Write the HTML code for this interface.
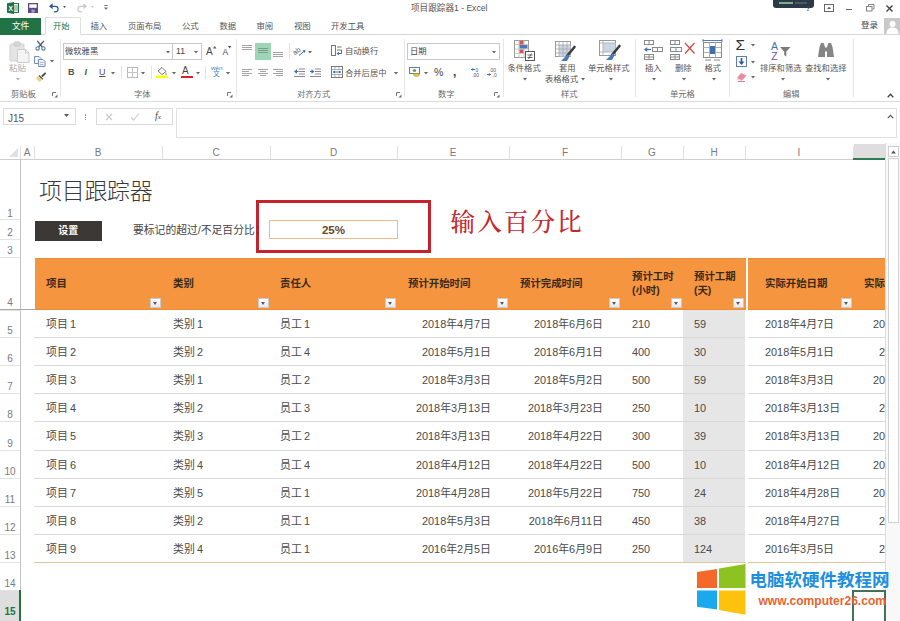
<!DOCTYPE html>
<html lang="zh-CN">
<head>
<meta charset="utf-8">
<title>项目跟踪器1 - Excel</title>
<style>
*{box-sizing:border-box;margin:0;padding:0}
html,body{width:900px;height:621px;overflow:hidden;background:#fff}
body{position:relative;font-family:"Liberation Sans","Noto Sans CJK SC",sans-serif;color:#444;font-size:9px}
.a{position:absolute;white-space:nowrap}
.t{position:absolute;white-space:nowrap;line-height:1;color:#555}
svg{position:absolute;overflow:visible}
/* ---------- title / tabs ---------- */
#title{left:411px;top:3.5px;font-size:8.6px;color:#555;letter-spacing:0}
#filetab{left:0;top:18px;width:41px;height:17px;background:#217346;color:#fff;font-size:8.6px;text-align:center;line-height:16px}
.tab{top:22px;font-size:8.4px;color:#555}
#hometab{left:45px;top:17px;width:36px;height:18px;border:1px solid #e0e0e0;border-bottom:1px solid #fff;background:#fff}
#tabline{left:0;top:34px;width:900px;height:1px;background:#d8d8d8}
#ribbonbot{left:0;top:101px;width:900px;height:1px;background:#dcdcdc}
.gsep{width:1px;top:39px;height:58px;background:#e6e6e6}
.glabel{top:89px;font-size:9px;color:#666}
.rl{font-size:9px;color:#444}
/* ---------- formula bar ---------- */
.box{border:1px solid #dadada;background:#fff}
/* ---------- sheet ---------- */
.colh{top:145px;font-size:10px;color:#7a7a7a;text-align:center;height:15px;line-height:15px}
.rowh{left:0;width:20px;text-align:center;font-size:10px;color:#7a7a7a;line-height:1}
.vl{width:1px;background:#e0e0e0}
.hl{height:1px;background:#d9d9d9}
.th{font-weight:bold;font-size:10.4px;color:#3a2a1a;line-height:1}
.td{font-size:10.9px;color:#4a4a4a;line-height:1}
.fb{width:11px;height:10px;background:linear-gradient(#fff,#e9e9e9);border:1px solid #c9c9c9}
.fb:after{content:"";position:absolute;left:2px;top:3px;border:2.5px solid transparent;border-top:3px solid #5a5a5a;border-bottom:0}
</style>
</head>
<body>
<!-- TITLE BAR -->
<div class="t" id="title">项目跟踪器1 - Excel</div>
<!-- TABS -->
<div class="a" id="tabline"></div>
<div class="a" id="filetab">文件</div>
<div class="a" id="hometab"></div>
<div class="t tab" style="left:53px;color:#217346">开始</div>
<div class="t tab" style="left:90.5px">插入</div>
<div class="t tab" style="left:128px">页面布局</div>
<div class="t tab" style="left:182px">公式</div>
<div class="t tab" style="left:219.5px">数据</div>
<div class="t tab" style="left:256.5px">审阅</div>
<div class="t tab" style="left:294px">视图</div>
<div class="t tab" style="left:331px">开发工具</div>
<div class="t" style="left:861px;top:21px;font-size:8.5px;color:#444">登录</div>
<!-- QUICK ACCESS TOOLBAR -->
<svg style="left:7px;top:2px" width="12" height="12" viewBox="0 0 12 12" ><rect x="5" y="1.5" width="6.5" height="9" fill="#fff" stroke="#217346" stroke-width="1"/><path d="M7 4H11M7 6H11M7 8H11" stroke="#217346" stroke-width=".8"/><path d="M0 1.3L7 0V12L0 10.7Z" fill="#217346"/><text x="1.6" y="8.6" font-family="Liberation Sans,sans-serif" font-size="6.5" font-weight="bold" fill="#fff">X</text></svg>
<svg style="left:28.3px;top:3.2px" width="10" height="10" viewBox="0 0 10 10" ><rect x=".65" y=".65" width="8.7" height="8.7" fill="#fff" stroke="#5b4a8a" stroke-width="1.3"/><rect x="1" y="4.8" width="8" height="4.6" fill="#5b4a8a"/><rect x="3.4" y="6.6" width="3.2" height="3" fill="#a99fc6"/></svg>
<svg style="left:48.5px;top:3px" width="11" height="10" viewBox="0 0 11 10" ><path d="M1.5 3.3H6.3A2.8 2.8 0 0 1 6.3 8.9H4.8" fill="none" stroke="#2b579a" stroke-width="1.25"/><path d="M0 3.3L3.6 .3V6.3Z" fill="#2b579a"/></svg>
<svg style="left:63.3px;top:6.2px" width="3" height="2" viewBox="0 0 3 2"><path d="M0 0H3L1.5 2Z" fill="#555"/></svg>
<svg style="left:76px;top:3px" width="11" height="10" viewBox="0 0 11 10" ><path d="M9.5 3.3H4.7A2.8 2.8 0 0 0 4.7 8.9H6.2" fill="none" stroke="#cacaca" stroke-width="1.25"/><path d="M11 3.3L7.4 .3V6.3Z" fill="#cacaca"/></svg>
<svg style="left:90.5px;top:6.2px" width="3" height="2" viewBox="0 0 3 2"><path d="M0 0H3L1.5 2Z" fill="#c8c8c8"/></svg>
<svg style="left:104px;top:5.3px" width="4" height="5" viewBox="0 0 4 5" ><path d="M.3 .5H3.7" stroke="#666" stroke-width=".9"/><path d="M0 2.4H4L2 4.8Z" fill="#666"/></svg>
<div class="a" style="left:773px;top:0;width:41px;height:8px;background:#2c3a47;border-radius:0 0 3px 3px"></div>
<div class="a" style="left:779px;top:2px;width:14px;height:2px;background:#7fae8c"></div>
<div class="a" style="left:795px;top:2px;width:12px;height:2px;background:#4a5a68"></div>
<div class="t" style="left:806px;top:6px;font-size:6.5px;color:#444;font-weight:bold">?</div>
<svg style="left:824px;top:4px" width="10" height="8" viewBox="0 0 10 8" ><rect x=".5" y=".5" width="9" height="7" fill="none" stroke="#666" stroke-width="1"/><path d="M3 5L5 2.5L7 5Z" fill="#666"/></svg>
<div class="a" style="left:845.5px;top:9px;width:6.5px;height:1px;background:#666"></div>
<svg style="left:865.5px;top:4px" width="9" height="8" viewBox="0 0 9 8" ><path d="M2.5 2V.5H8V5H6.5" fill="none" stroke="#777" stroke-width=".9"/><rect x=".5" y="2.5" width="5.5" height="4.5" fill="#fff" stroke="#777" stroke-width=".9"/></svg>
<svg style="left:886px;top:5px" width="7" height="7" viewBox="0 0 7 7" ><path d="M.5 .5L6.5 6.5M6.5 .5L.5 6.5" stroke="#444" stroke-width="1.4"/></svg>
<div class="a" style="left:884px;top:18px;width:16px;height:16px;background:#c9c9c9;overflow:hidden"></div>
<svg style="left:884px;top:18px" width="16" height="16" viewBox="0 0 16 16" ><circle cx="8.5" cy="6" r="3" fill="#fff"/><path d="M2.5 16C2.5 11 5 9.5 8.5 9.5S14.5 11 14.5 16Z" fill="#fff"/></svg>
<!-- RIBBON GROUPS -->
<div class="a gsep" style="left:60px"></div>
<div class="a gsep" style="left:236px"></div>
<div class="a gsep" style="left:404px"></div>
<div class="a gsep" style="left:503px"></div>
<div class="a gsep" style="left:635px"></div>
<div class="a gsep" style="left:729px"></div>
<div class="a gsep" style="left:853px"></div>
<svg style="left:9px;top:41px" width="21" height="22" viewBox="0 0 21 22" ><rect x="1" y="3" width="14" height="17" rx="1" fill="#e4e4e4" stroke="#cfcfcf"/><rect x="5" y="1" width="6" height="4" rx="1" fill="#d8d8d8" stroke="#c6c6c6"/><path d="M8.5 8.5H16.5L20 12V21.5H8.5Z" fill="#f4f4f4" stroke="#cccccc"/><path d="M16.5 8.5V12H20" fill="none" stroke="#ccc"/></svg>
<div class="t" style="left:9px;top:64px;font-size:8.5px;color:#ababab;">粘贴</div>
<svg style="left:16px;top:78px" width="4" height="2.4" viewBox="0 0 4 2.4"><path d="M0 0H4L2 2.4Z" fill="#b0b0b0"/></svg>
<svg style="left:35px;top:40px" width="11" height="11" viewBox="0 0 11 11" ><path d="M2.2 .8L7.3 7M8.8 .8L3.7 7" stroke="#50596a" stroke-width="1.3" fill="none"/><circle cx="2.6" cy="8.4" r="1.7" fill="none" stroke="#5878a8" stroke-width="1.1"/><circle cx="8.4" cy="8.4" r="1.7" fill="none" stroke="#5878a8" stroke-width="1.1"/></svg>
<svg style="left:34px;top:56px" width="12" height="11" viewBox="0 0 12 11" ><path d="M.5 .5H5L7 2.5V7.5H.5Z" fill="#eef2f8" stroke="#7a8fae"/><path d="M4.5 3.5H9L11 5.5V10.5H4.5Z" fill="#eef2f8" stroke="#7a8fae"/><path d="M6 6.5H9.5M6 8.5H9.5" stroke="#9ab" stroke-width=".8"/></svg>
<svg style="left:50px;top:60px" width="4" height="2.4" viewBox="0 0 4 2.4"><path d="M0 0H4L2 2.4Z" fill="#666"/></svg>
<svg style="left:35px;top:72px" width="12" height="11" viewBox="0 0 12 11" ><path d="M7.3 4L10.2 1.4" stroke="#4a4a4a" stroke-width="1.8" stroke-linecap="round"/><path d="M3 4L7 8L4.5 10L1 6.5Z" fill="#ecd778"/><path d="M4 3.4L7.8 7.2" stroke="#555" stroke-width="1.4"/></svg>
<div class="t" style="left:11px;top:90px;font-size:8.3px;color:#6a6a6a;">剪贴板</div>
<svg style="left:52px;top:92px" width="6" height="6" viewBox="0 0 6 6" ><path d="M.5 4V.5H4" fill="none" stroke="#777" stroke-width="1"/><path d="M2.5 5.5H5.5V2.5Z" fill="#666"/></svg>
<div class="a box" style="left:63px;top:43px;width:110px;height:17px;border-color:#c8c8c8"></div>
<div class="a box" style="left:172px;top:43px;width:30px;height:17px;border-color:#c8c8c8"></div>
<div class="t" style="left:65px;top:47px;font-size:8.3px;color:#444;">微软雅黑</div>
<svg style="left:165.5px;top:50.5px" width="4" height="2.4" viewBox="0 0 4 2.4"><path d="M0 0H4L2 2.4Z" fill="#666"/></svg>
<div class="t" style="left:176px;top:47px;font-size:8.6px;color:#444;">11</div>
<svg style="left:194px;top:50.5px" width="4" height="2.4" viewBox="0 0 4 2.4"><path d="M0 0H4L2 2.4Z" fill="#666"/></svg>
<div class="t" style="left:206px;top:46.5px;font-size:10px;color:#4a4a4a;">A</div>
<svg style="left:212.5px;top:45.5px" width="3.4" height="2.6" viewBox="0 0 3.4 2.6" ><path d="M0 2.6L1.7 0L3.4 2.6Z" fill="#555"/></svg>
<div class="t" style="left:222.5px;top:48px;font-size:8.5px;color:#4a4a4a;">A</div>
<svg style="left:228px;top:46px" width="3.4" height="2.6" viewBox="0 0 3.4 2.6" ><path d="M0 0L1.7 2.6L3.4 0Z" fill="#555"/></svg>
<div class="t" style="left:68px;top:68px;font-size:9px;color:#555;font-weight:bold">B</div>
<div class="t" style="left:84.5px;top:68px;font-size:9px;color:#555;font-weight:bold;font-style:italic">I</div>
<div class="t" style="left:99px;top:68px;font-size:9px;color:#555;text-decoration:underline">U</div>
<svg style="left:111px;top:72px" width="4" height="2.4" viewBox="0 0 4 2.4"><path d="M0 0H4L2 2.4Z" fill="#666"/></svg>
<div class="a" style="left:121px;top:66px;width:1px;height:13px;background:#e2e2e2"></div>
<svg style="left:127px;top:67px" width="11" height="11" viewBox="0 0 11 11" ><rect x=".5" y=".5" width="10" height="10" fill="none" stroke="#b8b8b8"/><path d="M5.5 0V11M0 5.5H11" stroke="#c4c4c4"/></svg>
<svg style="left:141px;top:72px" width="4" height="2.4" viewBox="0 0 4 2.4"><path d="M0 0H4L2 2.4Z" fill="#666"/></svg>
<div class="a" style="left:151px;top:66px;width:1px;height:13px;background:#e2e2e2"></div>
<svg style="left:156px;top:66px" width="12" height="12" viewBox="0 0 12 12" ><path d="M2 5L6 1.5L10 5.5L6 8.5Z" fill="#fff" stroke="#777"/><path d="M10 6.5C11 8 11 8.6 10.2 8.8S9.2 8 10 6.5Z" fill="#777"/><rect x="0" y="9.5" width="12" height="2.5" fill="#ffff00"/></svg>
<svg style="left:172px;top:72px" width="4" height="2.4" viewBox="0 0 4 2.4"><path d="M0 0H4L2 2.4Z" fill="#666"/></svg>
<div class="t" style="left:182px;top:66px;font-size:10px;color:#444;">A</div>
<div class="a" style="left:181px;top:75.5px;width:12px;height:2.5px;background:#e01f1f"></div>
<svg style="left:196px;top:72px" width="4" height="2.4" viewBox="0 0 4 2.4"><path d="M0 0H4L2 2.4Z" fill="#666"/></svg>
<div class="a" style="left:205px;top:66px;width:1px;height:13px;background:#e2e2e2"></div>
<div class="t" style="left:211px;top:65px;font-size:6.2px;color:#4a78b8;">wén</div>
<div class="t" style="left:213px;top:71px;font-size:6.8px;color:#4a78b8;">文</div>
<svg style="left:226px;top:72px" width="4" height="2.4" viewBox="0 0 4 2.4"><path d="M0 0H4L2 2.4Z" fill="#666"/></svg>
<div class="t" style="left:134px;top:90px;font-size:8.3px;color:#6a6a6a;">字体</div>
<svg style="left:227px;top:92px" width="6" height="6" viewBox="0 0 6 6" ><path d="M.5 4V.5H4" fill="none" stroke="#777" stroke-width="1"/><path d="M2.5 5.5H5.5V2.5Z" fill="#666"/></svg>
<svg style="left:242px;top:45px" width="10" height="6" viewBox="0 0 10 6" ><rect x="0" y="0" width="10" height="1" fill="#a2a2a2"/><rect x="0" y="2" width="10" height="1" fill="#a2a2a2"/><rect x="0" y="4" width="10" height="1" fill="#a2a2a2"/></svg>
<div class="a" style="left:255px;top:43px;width:16px;height:17px;background:#9fd5b7"></div>
<svg style="left:258px;top:48px" width="10" height="6" viewBox="0 0 10 6" ><rect x="0" y="0" width="10" height="1" fill="#7c9a88"/><rect x="0" y="2" width="10" height="1" fill="#7c9a88"/><rect x="0" y="4" width="10" height="1" fill="#7c9a88"/></svg>
<svg style="left:273px;top:52px" width="10" height="6" viewBox="0 0 10 6" ><rect x="0" y="0" width="10" height="1" fill="#a2a2a2"/><rect x="0" y="2" width="10" height="1" fill="#a2a2a2"/><rect x="0" y="4" width="10" height="1" fill="#a2a2a2"/></svg>
<div class="a" style="left:289px;top:43px;width:1px;height:16px;background:#e2e2e2"></div>
<svg style="left:294px;top:45px" width="12" height="11" viewBox="0 0 12 11" ><text x="0" y="8" font-size="7" font-family="Liberation Sans,sans-serif" fill="#555" transform="rotate(-35 4 8)">ab</text><path d="M5 10.5L11 5.5" stroke="#3f6fb0" stroke-width="1"/><path d="M11.5 5L8.5 5.6L10.8 8Z" fill="#3f6fb0"/></svg>
<svg style="left:308px;top:50.5px" width="4" height="2.4" viewBox="0 0 4 2.4"><path d="M0 0H4L2 2.4Z" fill="#666"/></svg>
<svg style="left:331px;top:45px" width="11" height="11" viewBox="0 0 11 11" ><rect x=".5" y=".5" width="4" height="10" fill="#fff" stroke="#777"/><path d="M6 2H10.5M6 5H10.5" stroke="#777"/><path d="M6 8.5H10.5V5" fill="none" stroke="#3f6fb0"/><path d="M5.5 8.5L8 6.8V10.2Z" fill="#3f6fb0"/></svg>
<div class="t" style="left:345px;top:47px;font-size:8.3px;color:#555;">自动换行</div>
<svg style="left:242px;top:69px" width="10" height="8" viewBox="0 0 10 8" ><rect x="0" y="0" width="10" height="1" fill="#a2a2a2"/><rect x="0" y="2" width="7" height="1" fill="#a2a2a2"/><rect x="0" y="4" width="10" height="1" fill="#a2a2a2"/><rect x="0" y="6" width="7" height="1" fill="#a2a2a2"/></svg>
<svg style="left:257.5px;top:69px" width="10" height="8" viewBox="0 0 10 8" ><rect x="0.0" y="0" width="10" height="1" fill="#a2a2a2"/><rect x="2.0" y="2" width="6" height="1" fill="#a2a2a2"/><rect x="0.0" y="4" width="10" height="1" fill="#a2a2a2"/><rect x="2.0" y="6" width="6" height="1" fill="#a2a2a2"/></svg>
<svg style="left:273px;top:69px" width="10" height="8" viewBox="0 0 10 8" ><rect x="0" y="0" width="10" height="1" fill="#a2a2a2"/><rect x="3" y="2" width="7" height="1" fill="#a2a2a2"/><rect x="0" y="4" width="10" height="1" fill="#a2a2a2"/><rect x="3" y="6" width="7" height="1" fill="#a2a2a2"/></svg>
<svg style="left:294px;top:68px" width="11" height="10" viewBox="0 0 11 10" ><path d="M5 1H11M5 3.5H11M5 6H11M0 8.5H11" stroke="#8a8a8a"/><path d="M0 3.5L3 1.3V5.7Z" fill="#3f6fb0"/><path d="M2 3.5H4.5" stroke="#3f6fb0"/></svg>
<svg style="left:310px;top:68px" width="11" height="10" viewBox="0 0 11 10" ><path d="M5 1H11M5 3.5H11M5 6H11M0 8.5H11" stroke="#8a8a8a"/><path d="M4.5 3.5L1.5 1.3V5.7Z" fill="#3f6fb0"/><path d="M0 3.5H2.5" stroke="#3f6fb0"/></svg>
<svg style="left:331px;top:66px" width="12" height="12" viewBox="0 0 12 12" ><rect x=".5" y=".5" width="11" height="11" fill="#fff" stroke="#777"/><path d="M.5 3.5H11.5M.5 8.5H11.5M4 .5V3.5M8 .5V3.5M4 8.5V11.5M8 8.5V11.5" stroke="#999" stroke-width=".8"/><path d="M2 6H10" stroke="#3f6fb0"/><path d="M2 6L4 4.5V7.5ZM10 6L8 4.5V7.5Z" fill="#3f6fb0"/></svg>
<div class="t" style="left:345px;top:69px;font-size:8.3px;color:#555;">合并后居中</div>
<svg style="left:394px;top:72px" width="4" height="2.4" viewBox="0 0 4 2.4"><path d="M0 0H4L2 2.4Z" fill="#666"/></svg>
<div class="t" style="left:297px;top:90px;font-size:8.3px;color:#6a6a6a;">对齐方式</div>
<svg style="left:396px;top:92px" width="6" height="6" viewBox="0 0 6 6" ><path d="M.5 4V.5H4" fill="none" stroke="#777" stroke-width="1"/><path d="M2.5 5.5H5.5V2.5Z" fill="#666"/></svg>
<div class="a box" style="left:407px;top:43px;width:93px;height:17px;border-color:#c8c8c8"></div>
<div class="t" style="left:410px;top:47px;font-size:8.3px;color:#444;">日期</div>
<svg style="left:492px;top:50.5px" width="4" height="2.4" viewBox="0 0 4 2.4"><path d="M0 0H4L2 2.4Z" fill="#666"/></svg>
<svg style="left:409px;top:66px" width="12" height="11" viewBox="0 0 12 11" ><rect x=".5" y="1.5" width="10" height="6" fill="#fff" stroke="#5a7fb5"/><circle cx="5.5" cy="4.5" r="1.6" fill="#6a9a5a"/><ellipse cx="7.5" cy="9" rx="3" ry="1.4" fill="#e8c44a" stroke="#b89a30" stroke-width=".6"/></svg>
<svg style="left:424px;top:72px" width="4" height="2.4" viewBox="0 0 4 2.4"><path d="M0 0H4L2 2.4Z" fill="#666"/></svg>
<div class="t" style="left:434px;top:67px;font-size:10.5px;color:#444;">%</div>
<div class="t" style="left:453px;top:66px;font-size:12px;color:#444;font-weight:bold">,</div>
<svg style="left:471px;top:67px" width="11" height="10" viewBox="0 0 11 10" ><path d="M0 2.5H4" stroke="#3f6fb0"/><path d="M0 2.5L2.2 1V4Z" fill="#3f6fb0"/><text x="4.5" y="4.5" font-size="5" font-family="Liberation Sans,sans-serif" fill="#555">0</text><text x="1" y="10" font-size="5" font-family="Liberation Sans,sans-serif" fill="#555">.00</text></svg>
<svg style="left:487px;top:67px" width="11" height="10" viewBox="0 0 11 10" ><path d="M0 7.5H4" stroke="#3f6fb0"/><path d="M4 7.5L1.8 6V9Z" fill="#3f6fb0"/><text x="2" y="4.5" font-size="5" font-family="Liberation Sans,sans-serif" fill="#555">.00</text><text x="5.5" y="10" font-size="5" font-family="Liberation Sans,sans-serif" fill="#555">.0</text></svg>
<div class="t" style="left:438px;top:90px;font-size:8.3px;color:#6a6a6a;">数字</div>
<svg style="left:494px;top:92px" width="6" height="6" viewBox="0 0 6 6" ><path d="M.5 4V.5H4" fill="none" stroke="#777" stroke-width="1"/><path d="M2.5 5.5H5.5V2.5Z" fill="#666"/></svg>
<svg style="left:514px;top:40px" width="21" height="21" viewBox="0 0 21 21" ><rect x=".5" y=".5" width="14" height="17" fill="#fff" stroke="#9a9a9a"/><path d="M5 .5V17.5M10 .5V17.5M.5 4.5H14.5M.5 9H14.5M.5 13.5H14.5" stroke="#bdbdbd" stroke-width=".8"/><rect x="5.5" y="1" width="4" height="3.5" fill="#d8564a"/><rect x="5.5" y="5" width="8" height="3.5" fill="#4a78b8"/><rect x="5.5" y="9.5" width="4" height="3.5" fill="#d8564a"/><rect x="11.5" y="11.5" width="9" height="9" fill="#fff" stroke="#555"/><path d="M13.5 15H18.5M13.5 17.5H18.5M17.5 13.5L14.5 19" stroke="#555" stroke-width=".9"/></svg>
<div class="t" style="left:507.5px;top:64px;font-size:8.3px;color:#555;">条件格式</div>
<svg style="left:523px;top:78px" width="4" height="2.4" viewBox="0 0 4 2.4"><path d="M0 0H4L2 2.4Z" fill="#666"/></svg>
<svg style="left:555px;top:41px" width="21" height="21" viewBox="0 0 21 21" ><rect x=".5" y=".5" width="15" height="15" fill="#fff" stroke="#9a9a9a"/><rect x="4" y="4" width="11.5" height="11.5" fill="#c9d6e6"/><path d="M4 .5V15.5M8 .5V15.5M12 .5V15.5M.5 4H15.5M.5 8H15.5M.5 12H15.5" stroke="#a8a8a8" stroke-width=".8"/><path d="M19.5 6L12 15" stroke="#3c3c3c" stroke-width="2.6" stroke-linecap="round"/><path d="M12.8 13.2L6 20H12L14.8 15Z" fill="#4a78b8"/></svg>
<div class="t" style="left:559px;top:64px;font-size:8.3px;color:#555;">套用</div>
<div class="t" style="left:545px;top:75px;font-size:8.3px;color:#555;">表格格式</div>
<svg style="left:580.5px;top:78px" width="4" height="2.4" viewBox="0 0 4 2.4"><path d="M0 0H4L2 2.4Z" fill="#666"/></svg>
<svg style="left:599px;top:40px" width="22" height="21" viewBox="0 0 22 21" ><rect x=".5" y=".5" width="16" height="15" fill="#fff" stroke="#9a9a9a"/><rect x="4" y="3" width="12.5" height="9" fill="#c9d6e6"/><path d="M.5 3H16.5M.5 12H16.5M4 .5V15.5" stroke="#a8a8a8" stroke-width=".8"/><path d="M20.5 6L13 15" stroke="#3c3c3c" stroke-width="2.6" stroke-linecap="round"/><path d="M13.8 13.2L7 20H13L15.8 15Z" fill="#4a78b8"/></svg>
<div class="t" style="left:588px;top:64px;font-size:8.3px;color:#555;">单元格样式</div>
<svg style="left:609px;top:78px" width="4" height="2.4" viewBox="0 0 4 2.4"><path d="M0 0H4L2 2.4Z" fill="#666"/></svg>
<div class="t" style="left:561px;top:90px;font-size:8.3px;color:#6a6a6a;">样式</div>
<svg style="left:644px;top:40px" width="19" height="20" viewBox="0 0 19 20" ><rect x=".5" y=".5" width="9" height="4" fill="#fff" stroke="#8a8a8a"/><path d="M5 .5V4.5" stroke="#8a8a8a"/><rect x="8.5" y="7.5" width="10" height="4" fill="#fff" stroke="#8a8a8a"/><path d="M13.5 7.5V11.5" stroke="#8a8a8a"/><rect x=".5" y="14.5" width="9" height="5" fill="#fff" stroke="#8a8a8a"/><path d="M5 14.5V19.5M.5 17H9.5" stroke="#8a8a8a"/><path d="M1 9.5H7" stroke="#3f6fb0" stroke-width="1.2"/><path d="M0 9.5L3.2 7V12Z" fill="#3f6fb0"/></svg>
<div class="t" style="left:645px;top:64px;font-size:8.3px;color:#555;">插入</div>
<svg style="left:652px;top:78px" width="4" height="2.4" viewBox="0 0 4 2.4"><path d="M0 0H4L2 2.4Z" fill="#666"/></svg>
<svg style="left:670px;top:40px" width="26" height="20" viewBox="0 0 26 20" ><rect x=".5" y=".5" width="9" height="4" fill="#fff" stroke="#8a8a8a"/><path d="M5 .5V4.5" stroke="#8a8a8a"/><rect x=".5" y="7.5" width="11" height="4" fill="#fff" stroke="#8a8a8a"/><path d="M6 7.5V11.5" stroke="#8a8a8a"/><rect x=".5" y="14.5" width="9" height="5" fill="#fff" stroke="#8a8a8a"/><path d="M5 14.5V19.5M.5 17H9.5" stroke="#8a8a8a"/><path d="M15 3L24.5 13.5M24.5 3L15 13.5" stroke="#d8453a" stroke-width="1.2"/></svg>
<div class="t" style="left:675px;top:64px;font-size:8.3px;color:#555;">删除</div>
<svg style="left:682px;top:78px" width="4" height="2.4" viewBox="0 0 4 2.4"><path d="M0 0H4L2 2.4Z" fill="#666"/></svg>
<svg style="left:702px;top:39px" width="21" height="23" viewBox="0 0 21 23" ><rect x="1.5" y="3.5" width="18" height="15" fill="#fff" stroke="#8a8a8a"/><path d="M7.5 3.5V18.5M13.5 3.5V18.5M1.5 8.5H19.5M1.5 13.5H19.5" stroke="#a8a8a8" stroke-width=".9"/><rect x="8" y="7" width="5" height="8" fill="#3f6fb0"/><path d="M1 1.5H20M1 0V3M20 0V3" stroke="#3f6fb0" stroke-width=".9"/><path d="M3 21H9M12 21H18" stroke="#8a8a8a" stroke-width="1"/></svg>
<div class="t" style="left:704.5px;top:64px;font-size:8.3px;color:#555;">格式</div>
<svg style="left:712px;top:78px" width="4" height="2.4" viewBox="0 0 4 2.4"><path d="M0 0H4L2 2.4Z" fill="#666"/></svg>
<div class="t" style="left:670px;top:90px;font-size:8.3px;color:#6a6a6a;">单元格</div>
<div class="t" style="left:735.5px;top:37px;font-size:15.5px;color:#333;font-family:'Liberation Sans','DejaVu Sans',sans-serif">Σ</div>
<svg style="left:750.5px;top:44px" width="4" height="2.4" viewBox="0 0 4 2.4"><path d="M0 0H4L2 2.4Z" fill="#666"/></svg>
<svg style="left:736px;top:56px" width="11" height="11" viewBox="0 0 11 11" ><rect x=".5" y=".5" width="10" height="10" fill="#fff" stroke="#5a7fb5"/><path d="M5.5 2V7" stroke="#2b579a" stroke-width="1.6"/><path d="M2.5 5.5H8.5L5.5 9Z" fill="#2b579a"/></svg>
<svg style="left:750.5px;top:60.5px" width="4" height="2.4" viewBox="0 0 4 2.4"><path d="M0 0H4L2 2.4Z" fill="#666"/></svg>
<svg style="left:736px;top:72px" width="12" height="10" viewBox="0 0 12 10" ><path d="M5 1L10.5 3.5L6 8.5L1 6Z" fill="#e98ba0"/><path d="M1 6L6 8.5L5 9.5L.5 7.5Z" fill="#f6d0d8"/><path d="M2 9.5H9" stroke="#c46a80" stroke-width=".8"/></svg>
<svg style="left:750.5px;top:76px" width="4" height="2.4" viewBox="0 0 4 2.4"><path d="M0 0H4L2 2.4Z" fill="#666"/></svg>
<svg style="left:771px;top:41px" width="20" height="20" viewBox="0 0 20 20" ><text x="0" y="8.5" font-size="10.5" font-family="Liberation Sans,sans-serif" fill="#3f6fb0">A</text><text x="0.3" y="19" font-size="10.5" font-family="Liberation Sans,sans-serif" fill="#8a4aa0">Z</text><path d="M9 6H19.5L15.3 10.5V15.5L13.2 14V10.5Z" fill="#7a7a7a"/></svg>
<div class="t" style="left:760px;top:64px;font-size:8.3px;color:#555;">排序和筛选</div>
<svg style="left:780.5px;top:78px" width="4" height="2.4" viewBox="0 0 4 2.4"><path d="M0 0H4L2 2.4Z" fill="#666"/></svg>
<svg style="left:817px;top:41px" width="18" height="17" viewBox="0 0 18 17" ><path d="M1 16L2.5 6L4 2H6.5L8 6V16ZM10 16V6L11.5 2H14L15.5 6L17 16Z" fill="#858585"/><rect x="7.5" y="6.5" width="3" height="4" fill="#858585"/></svg>
<div class="t" style="left:805px;top:64px;font-size:8.3px;color:#555;">查找和选择</div>
<svg style="left:825.5px;top:78px" width="4" height="2.4" viewBox="0 0 4 2.4"><path d="M0 0H4L2 2.4Z" fill="#666"/></svg>
<div class="t" style="left:783px;top:90px;font-size:8.3px;color:#6a6a6a;">编辑</div>
<svg style="left:887px;top:93px" width="7" height="5" viewBox="0 0 7 5" ><path d="M.7 4.2L3.5 1.2L6.3 4.2" fill="none" stroke="#444" stroke-width="1.3"/></svg>
<div class="a" id="ribbonbot"></div>
<!-- FORMULA BAR -->
<div class="a box" style="left:3px;top:108px;width:73px;height:17px"></div>
<div class="t" style="left:8px;top:113.5px;font-size:10px;color:#555">J15</div>
<svg style="left:64px;top:114px" width="6" height="4"><path d="M0 0H5L2.5 3Z" fill="#555"/></svg>
<div class="a" style="left:85px;top:114px;width:1px;height:6px;border-left:1px dotted #9a9a9a"></div>
<div class="a box" style="left:96px;top:108px;width:77px;height:17px"></div>
<svg style="left:104px;top:112px" width="60" height="10" fill="none" stroke="#c8c8c8" stroke-width="1.1"><path d="M2 2L8 8M8 2L2 8"/><path d="M27 5.5L29.5 8L35 1.5"/></svg>
<div class="t" style="left:155px;top:111px;font-size:10px;font-style:italic;font-family:'Liberation Serif',serif;color:#444">f<span style="font-size:7px">x</span></div>
<div class="a box" style="left:176px;top:108px;width:721px;height:30px;border-color:#e0e0e0"></div>
<svg style="left:887px;top:113.5px" width="7" height="5" fill="none" stroke="#555" stroke-width="1.2"><path d="M.8 4.2L3.5 1.4L6.2 4.2"/></svg>
<!-- SHEET -->
<div class="a" style="left:0;top:143px;width:886px;height:16px;background:#fff"></div>
<svg style="left:9px;top:148px" width="9" height="9"><path d="M9 0V9H0Z" fill="#e1e1e1"/></svg>
<div class="a colh" style="left:20px;width:14px">A</div>
<div class="a vl" style="left:34px;top:146px;height:13px"></div>
<div class="a colh" style="left:34px;width:128px">B</div>
<div class="a vl" style="left:162px;top:146px;height:13px"></div>
<div class="a colh" style="left:162px;width:108px">C</div>
<div class="a vl" style="left:270px;top:146px;height:13px"></div>
<div class="a colh" style="left:270px;width:127px">D</div>
<div class="a vl" style="left:397px;top:146px;height:13px"></div>
<div class="a colh" style="left:397px;width:112px">E</div>
<div class="a vl" style="left:509px;top:146px;height:13px"></div>
<div class="a colh" style="left:509px;width:112px">F</div>
<div class="a vl" style="left:621px;top:146px;height:13px"></div>
<div class="a colh" style="left:621px;width:62px">G</div>
<div class="a vl" style="left:683px;top:146px;height:13px"></div>
<div class="a colh" style="left:683px;width:62px">H</div>
<div class="a vl" style="left:745px;top:146px;height:13px"></div>
<div class="a colh" style="left:745px;width:108px">I</div>
<div class="a vl" style="left:853px;top:146px;height:13px"></div>
<div class="a vl" style="left:20px;top:146px;height:13px"></div>
<div class="a" style="left:854px;top:144px;width:31px;height:14px;background:#dedede"></div>
<div class="a" style="left:853px;top:158px;width:33px;height:1.6px;background:#2f7a52"></div>
<div class="a hl" style="left:0;top:159px;width:853px;background:#cfcfcf"></div>
<div class="a vl" style="left:19.5px;top:159px;height:462px;background:#c4c4c4"></div>
<div class="a vl" style="left:885px;top:143px;height:478px;background:#dcdcdc"></div>
<div class="a" style="left:886px;top:143px;width:14px;height:478px;background:#f8f8f8"></div>
<div class="a" style="left:887.5px;top:146px;width:11px;height:11px;background:#fff;border:1px solid #cfcfcf"></div>
<svg style="left:890.5px;top:149.5px" width="5" height="4"><path d="M0 3.5L2.5 0.5L5 3.5Z" fill="#555"/></svg>
<div class="a" style="left:887.5px;top:158px;width:11px;height:365px;background:#fff;border:1px solid #d2d2d2"></div>
<div class="a rowh" style="top:209.0px">1</div>
<div class="a hl" style="left:0;top:219.0px;width:20px;background:#e2e2e2"></div>
<div class="a rowh" style="top:228.0px">2</div>
<div class="a hl" style="left:0;top:239.0px;width:20px;background:#e2e2e2"></div>
<div class="a rowh" style="top:246.0px">3</div>
<div class="a hl" style="left:0;top:257.0px;width:20px;background:#e2e2e2"></div>
<div class="a rowh" style="top:298.0px">4</div>
<div class="a hl" style="left:0;top:309.5px;width:20px;background:#e2e2e2"></div>
<div class="a rowh" style="top:326.1px">5</div>
<div class="a hl" style="left:0;top:337.1px;width:20px;background:#e2e2e2"></div>
<div class="a rowh" style="top:354.2px">6</div>
<div class="a hl" style="left:0;top:365.2px;width:20px;background:#e2e2e2"></div>
<div class="a rowh" style="top:382.3px">7</div>
<div class="a hl" style="left:0;top:393.3px;width:20px;background:#e2e2e2"></div>
<div class="a rowh" style="top:410.4px">8</div>
<div class="a hl" style="left:0;top:421.4px;width:20px;background:#e2e2e2"></div>
<div class="a rowh" style="top:438.5px">9</div>
<div class="a hl" style="left:0;top:449.5px;width:20px;background:#e2e2e2"></div>
<div class="a rowh" style="top:466.6px">10</div>
<div class="a hl" style="left:0;top:477.6px;width:20px;background:#e2e2e2"></div>
<div class="a rowh" style="top:494.7px">11</div>
<div class="a hl" style="left:0;top:505.7px;width:20px;background:#e2e2e2"></div>
<div class="a rowh" style="top:522.8px">12</div>
<div class="a hl" style="left:0;top:533.8px;width:20px;background:#e2e2e2"></div>
<div class="a rowh" style="top:550.9px">13</div>
<div class="a hl" style="left:0;top:561.9px;width:20px;background:#e2e2e2"></div>
<div class="a rowh" style="top:579.0px">14</div>
<div class="a hl" style="left:0;top:590.0px;width:20px;background:#e2e2e2"></div>
<div class="a" style="left:0;top:591px;width:20px;height:30px;background:#dedede"></div>
<div class="a" style="left:19px;top:590px;width:2px;height:31px;background:#217346"></div>
<div class="a rowh" style="top:607px;color:#217346;font-weight:bold">15</div>
<div class="a" style="left:0;top:309.3px;width:35px;height:1px;background:#a8a8a8"></div>
<div class="t" style="left:39px;top:179.5px;font-size:23px;font-weight:300;color:#3a3a3a;letter-spacing:-0.3px">项目跟踪器</div>
<div class="a" style="left:34.5px;top:221px;width:67.5px;height:20px;background:#3b3835;color:#fff;font-weight:bold;font-size:10px;text-align:center;line-height:19px">设置</div>
<div class="a" style="left:269px;top:220px;width:129px;height:19px;border:1px solid #f0b98a;background:#fff;text-align:center;font-size:11.6px;font-weight:bold;color:#6a4a20;line-height:17px">25%</div>
<div class="a" style="left:256px;top:200px;width:175px;height:53px;border:3px solid #c4222c"></div>
<div class="t" style="left:450.5px;top:211.3px;font-family:'Liberation Serif','Noto Serif CJK SC',serif;font-size:24.6px;font-weight:500;letter-spacing:2.05px;color:#c5282f">输入百分比</div>
<div class="t" style="left:133px;top:225px;font-size:10.8px;color:#444">要标记的超过/不足百分比：</div>
<div class="a" style="left:34.5px;top:257.6px;width:711px;height:52px;background:#f6953f;border-top:1px solid #ec8c3a;border-bottom:1px solid #ec8c3a"></div>
<div class="a" style="left:747.5px;top:257.6px;width:137.5px;height:52px;background:#f6953f;border-top:1px solid #ec8c3a;border-bottom:1px solid #ec8c3a"></div>
<div class="t th" style="left:46px;top:279px">项目</div>
<div class="t th" style="left:173px;top:279px">类别</div>
<div class="t th" style="left:280px;top:279px">责任人</div>
<div class="t th" style="left:408px;top:279px">预计开始时间</div>
<div class="t th" style="left:520px;top:279px">预计完成时间</div>
<div class="t th" style="left:632px;top:272px">预计工时</div>
<div class="t th" style="left:632px;top:286px">(小时)</div>
<div class="t th" style="left:694px;top:272px">预计工期</div>
<div class="t th" style="left:694px;top:286px">(天)</div>
<div class="t th" style="left:765px;top:279px">实际开始日期</div>
<div class="t th" style="left:864px;top:279px">实际</div>
<div class="a fb" style="left:150px;top:298px"></div>
<div class="a fb" style="left:258px;top:298px"></div>
<div class="a fb" style="left:385px;top:298px"></div>
<div class="a fb" style="left:497px;top:298px"></div>
<div class="a fb" style="left:609px;top:298px"></div>
<div class="a fb" style="left:671px;top:298px"></div>
<div class="a fb" style="left:733px;top:298px"></div>
<div class="a fb" style="left:841px;top:298px"></div>
<div class="a" style="left:683px;top:310px;width:62px;height:252px;background:#e6e6e6"></div>
<div class="a hl" style="left:34px;top:337.1px;width:711px"></div>
<div class="a hl" style="left:747px;top:337.1px;width:138px"></div>
<div class="t td" style="left:46px;top:319.0px">项目<span style="margin-left:-.8px"> </span>1</div>
<div class="t td" style="left:173px;top:319.0px">类别<span style="margin-left:-.8px"> </span>1</div>
<div class="t td" style="left:280px;top:319.0px">员工<span style="margin-left:-.8px"> </span>1</div>
<div class="t td" style="right:409px;top:319.0px">2018年4月7日</div>
<div class="t td" style="right:297px;top:319.0px">2018年6月6日</div>
<div class="t td" style="left:632px;top:319.0px">210</div>
<div class="t td" style="left:694px;top:319.0px">59</div>
<div class="t td" style="left:765px;top:319.0px">2018年4月7日</div>
<div class="t td" style="right:15px;top:319.0px">20</div>
<div class="a hl" style="left:34px;top:365.2px;width:711px"></div>
<div class="a hl" style="left:747px;top:365.2px;width:138px"></div>
<div class="t td" style="left:46px;top:347.1px">项目<span style="margin-left:-.8px"> </span>2</div>
<div class="t td" style="left:173px;top:347.1px">类别<span style="margin-left:-.8px"> </span>2</div>
<div class="t td" style="left:280px;top:347.1px">员工<span style="margin-left:-.8px"> </span>4</div>
<div class="t td" style="right:409px;top:347.1px">2018年5月1日</div>
<div class="t td" style="right:297px;top:347.1px">2018年6月1日</div>
<div class="t td" style="left:632px;top:347.1px">400</div>
<div class="t td" style="left:694px;top:347.1px">30</div>
<div class="t td" style="left:765px;top:347.1px">2018年5月1日</div>
<div class="t td" style="right:15px;top:347.1px">2</div>
<div class="a hl" style="left:34px;top:393.3px;width:711px"></div>
<div class="a hl" style="left:747px;top:393.3px;width:138px"></div>
<div class="t td" style="left:46px;top:375.2px">项目<span style="margin-left:-.8px"> </span>3</div>
<div class="t td" style="left:173px;top:375.2px">类别<span style="margin-left:-.8px"> </span>1</div>
<div class="t td" style="left:280px;top:375.2px">员工<span style="margin-left:-.8px"> </span>2</div>
<div class="t td" style="right:409px;top:375.2px">2018年3月3日</div>
<div class="t td" style="right:297px;top:375.2px">2018年5月2日</div>
<div class="t td" style="left:632px;top:375.2px">500</div>
<div class="t td" style="left:694px;top:375.2px">59</div>
<div class="t td" style="left:765px;top:375.2px">2018年3月3日</div>
<div class="t td" style="right:15px;top:375.2px">20</div>
<div class="a hl" style="left:34px;top:421.4px;width:711px"></div>
<div class="a hl" style="left:747px;top:421.4px;width:138px"></div>
<div class="t td" style="left:46px;top:403.3px">项目<span style="margin-left:-.8px"> </span>4</div>
<div class="t td" style="left:173px;top:403.3px">类别<span style="margin-left:-.8px"> </span>2</div>
<div class="t td" style="left:280px;top:403.3px">员工<span style="margin-left:-.8px"> </span>3</div>
<div class="t td" style="right:409px;top:403.3px">2018年3月13日</div>
<div class="t td" style="right:297px;top:403.3px">2018年3月23日</div>
<div class="t td" style="left:632px;top:403.3px">250</div>
<div class="t td" style="left:694px;top:403.3px">10</div>
<div class="t td" style="left:765px;top:403.3px">2018年3月13日</div>
<div class="t td" style="right:15px;top:403.3px">2</div>
<div class="a hl" style="left:34px;top:449.5px;width:711px"></div>
<div class="a hl" style="left:747px;top:449.5px;width:138px"></div>
<div class="t td" style="left:46px;top:431.4px">项目<span style="margin-left:-.8px"> </span>5</div>
<div class="t td" style="left:173px;top:431.4px">类别<span style="margin-left:-.8px"> </span>3</div>
<div class="t td" style="left:280px;top:431.4px">员工<span style="margin-left:-.8px"> </span>2</div>
<div class="t td" style="right:409px;top:431.4px">2018年3月13日</div>
<div class="t td" style="right:297px;top:431.4px">2018年4月22日</div>
<div class="t td" style="left:632px;top:431.4px">300</div>
<div class="t td" style="left:694px;top:431.4px">39</div>
<div class="t td" style="left:765px;top:431.4px">2018年3月13日</div>
<div class="t td" style="right:15px;top:431.4px">20</div>
<div class="a hl" style="left:34px;top:477.6px;width:711px"></div>
<div class="a hl" style="left:747px;top:477.6px;width:138px"></div>
<div class="t td" style="left:46px;top:459.5px">项目<span style="margin-left:-.8px"> </span>6</div>
<div class="t td" style="left:173px;top:459.5px">类别<span style="margin-left:-.8px"> </span>4</div>
<div class="t td" style="left:280px;top:459.5px">员工<span style="margin-left:-.8px"> </span>4</div>
<div class="t td" style="right:409px;top:459.5px">2018年4月12日</div>
<div class="t td" style="right:297px;top:459.5px">2018年4月22日</div>
<div class="t td" style="left:632px;top:459.5px">500</div>
<div class="t td" style="left:694px;top:459.5px">10</div>
<div class="t td" style="left:765px;top:459.5px">2018年4月12日</div>
<div class="t td" style="right:15px;top:459.5px">20</div>
<div class="a hl" style="left:34px;top:505.7px;width:711px"></div>
<div class="a hl" style="left:747px;top:505.7px;width:138px"></div>
<div class="t td" style="left:46px;top:487.6px">项目<span style="margin-left:-.8px"> </span>7</div>
<div class="t td" style="left:173px;top:487.6px">类别<span style="margin-left:-.8px"> </span>5</div>
<div class="t td" style="left:280px;top:487.6px">员工<span style="margin-left:-.8px"> </span>1</div>
<div class="t td" style="right:409px;top:487.6px">2018年4月28日</div>
<div class="t td" style="right:297px;top:487.6px">2018年5月22日</div>
<div class="t td" style="left:632px;top:487.6px">750</div>
<div class="t td" style="left:694px;top:487.6px">24</div>
<div class="t td" style="left:765px;top:487.6px">2018年4月28日</div>
<div class="t td" style="right:15px;top:487.6px">20</div>
<div class="a hl" style="left:34px;top:533.8px;width:711px"></div>
<div class="a hl" style="left:747px;top:533.8px;width:138px"></div>
<div class="t td" style="left:46px;top:515.7px">项目<span style="margin-left:-.8px"> </span>8</div>
<div class="t td" style="left:173px;top:515.7px">类别<span style="margin-left:-.8px"> </span>2</div>
<div class="t td" style="left:280px;top:515.7px">员工<span style="margin-left:-.8px"> </span>1</div>
<div class="t td" style="right:409px;top:515.7px">2018年5月3日</div>
<div class="t td" style="right:297px;top:515.7px">2018年6月11日</div>
<div class="t td" style="left:632px;top:515.7px">450</div>
<div class="t td" style="left:694px;top:515.7px">38</div>
<div class="t td" style="left:765px;top:515.7px">2018年4月27日</div>
<div class="t td" style="right:15px;top:515.7px">2</div>
<div class="t td" style="left:46px;top:543.8px">项目<span style="margin-left:-.8px"> </span>9</div>
<div class="t td" style="left:173px;top:543.8px">类别<span style="margin-left:-.8px"> </span>4</div>
<div class="t td" style="left:280px;top:543.8px">员工<span style="margin-left:-.8px"> </span>1</div>
<div class="t td" style="right:409px;top:543.8px">2016年2月5日</div>
<div class="t td" style="right:297px;top:543.8px">2016年6月9日</div>
<div class="t td" style="left:632px;top:543.8px">250</div>
<div class="t td" style="left:694px;top:543.8px">124</div>
<div class="t td" style="left:765px;top:543.8px">2016年3月5日</div>
<div class="t td" style="right:15px;top:543.8px">2</div>
<div class="a hl" style="left:34px;top:562px;width:851px;height:1.2px;background:#dcc6a4"></div>
<div class="a" style="left:745.5px;top:257px;width:2px;height:306px;background:#fff"></div>
<div class="a" style="left:852px;top:590px;width:34px;height:40px;border:2px solid #47705a"></div>
<svg style="left:0;top:0" width="900" height="621"><polygon points="697,572 717,569 717,588 697,588" fill="#f4682a"/><polygon points="719,568.6 745.5,564 745.5,588 719,588" fill="#8cc320"/><polygon points="697,590.6 717,590.6 717,609.4 697,606.7" fill="#1ba8ec"/><polygon points="719,590.6 745.5,590.6 745.5,614.8 719,610" fill="#fdc20c"/></svg>
<div class="t" style="left:749.5px;top:572px;font-size:17.5px;font-weight:bold;color:#1e8fe0">电脑软硬件教程网</div>
<div class="t" style="left:758.5px;top:595px;font-size:12px;font-weight:bold;color:#e8642c;letter-spacing:0.03px">www.computer26.com</div>
</body>
</html>
